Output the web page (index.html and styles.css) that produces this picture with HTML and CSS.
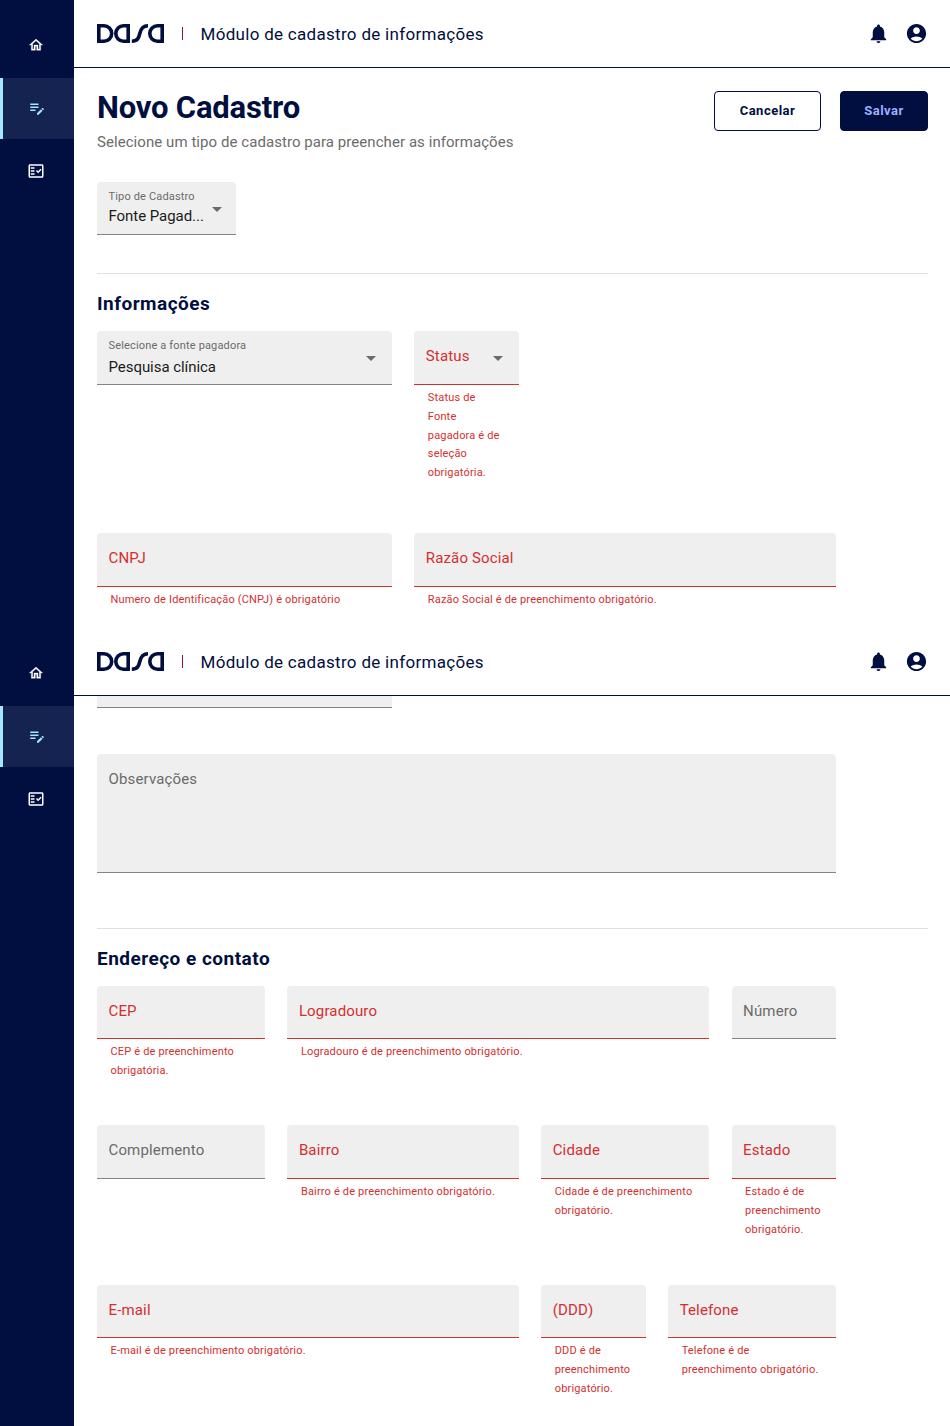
FILE: index.html
```html
<!DOCTYPE html>
<html lang="pt-BR">
<head>
<meta charset="utf-8">
<title>Novo Cadastro</title>
<link rel="stylesheet" href="styles.css">
</head>
<body>
<svg class="defs" width="0" height="0">
  <symbol id="logo" viewBox="0 0 67 19">
    <path fill="none" stroke="#000e40" stroke-width="3.6" d="M1.800 1.800H7A7.700 7.700 0 0 1 7 17.200H1.800Z M31.200 1.800H26.500A7.700 7.700 0 0 0 26.500 17.200H31.200Z M34.800 17.200C40.500 17.200 41.800 14 42.800 9.500S46 1.800 51 1.800 M65.200 1.800H60.500A7.700 7.700 0 0 0 60.500 17.200H65.200Z"/>
  </symbol>
  <symbol id="bell" viewBox="0 0 24 24"><path d="M12 22c1.1 0 2-.9 2-2h-4c0 1.1.9 2 2 2zm6-6v-5c0-3.07-1.63-5.64-4.5-6.32V4c0-.83-.67-1.5-1.5-1.5s-1.5.67-1.5 1.5v.68C7.64 5.36 6 7.92 6 11v5l-2 2v1h16v-1l-2-2z"/></symbol>
  <symbol id="user" viewBox="0 0 24 24"><path d="M12 2C6.48 2 2 6.48 2 12s4.48 10 10 10 10-4.48 10-10S17.52 2 12 2zm0 3.5c1.93 0 3.5 1.57 3.5 3.5s-1.57 3.5-3.5 3.5S8.500 10.930 8.500 9s1.570-3.500 3.500-3.500zM12 20c-2.030 0-4.430-.820-6.140-2.880C7.550 15.800 9.680 15 12 15s4.450.8 6.140 2.120C16.430 19.180 14.030 20 12 20z"/></symbol>
  <symbol id="home" viewBox="0 0 24 24"><path d="M12 5.690l5 4.500V18h-2v-6H9v6H7v-7.810l5-4.500M12 3L2 12h3v8h6v-6h2v6h6v-8h3L12 3z"/></symbol>
  <symbol id="edit" viewBox="0 0 24 24"><path d="M3 10h11v2H3v-2zm0-2h11V6H3v2zm0 8h7v-2H3v2zm15.010-3.130.710-.710c.390-.390 1.020-.390 1.410 0l.710.710c.390.390.390 1.020 0 1.410l-.710.710-2.120-2.120zm-.710.710-5.300 5.300V21h2.120l5.300-5.300-2.120-2.120z"/></symbol>
  <symbol id="check" viewBox="0 0 24 24"><path fill-rule="evenodd" d="M20 3H4c-1.100 0-2 .9-2 2v14c0 1.100.9 2 2 2h16c1.100 0 2-.9 2-2V5c0-1.100-.9-2-2-2zm0 16H4V5h16v14zM19.410 10.420 17.990 9l-3.170 3.170-1.410-1.420L12 12.160 14.820 15zM5 7h5v2H5zM5 11h5v2H5zM5 15h5v2H5z"/></symbol>
</svg>

<div class="view view-top">
  <nav class="side">
    <a class="nav"><svg><use href="#home"/></svg></a>
    <a class="nav active"><svg><use href="#edit"/></svg></a>
    <a class="nav"><svg><use href="#check"/></svg></a>
  </nav>
  <div class="page">
    <header class="bar">
      <svg class="logo"><use href="#logo"/></svg><span class="sep"></span>
      <span class="module">Módulo de cadastro de informações</span>
      <svg class="ico"><use href="#bell"/></svg><svg class="ico"><use href="#user"/></svg>
    </header>
    <main class="body">
      <div class="head">
        <div>
          <h1 class="title">Novo Cadastro</h1>
          <p class="sub">Selecione um tipo de cadastro para preencher as informações</p>
        </div>
        <div class="actions"><button class="btn">Cancelar</button><button class="btn primary">Salvar</button></div>
      </div>
      <div class="field select short kind"><div><span class="mini">Tipo de Cadastro</span><span class="value">Fonte Pagad...</span></div><i class="arrow"></i></div>
      <h2 class="section">Informações</h2>
      <div class="grid r202">
        <div class="c5"><div class="field select wide"><div><span class="mini">Selecione a fonte pagadora</span><span class="value">Pesquisa clínica</span></div><i class="arrow"></i></div></div>
        <div class="c2 error"><div class="field select"><span class="label">Status</span><i class="arrow"></i></div><p class="help">Status de Fonte pagadora é de seleção obrigatória.</p></div>
      </div>
      <div class="grid">
        <div class="c5 error"><div class="field"><span class="label">CNPJ</span></div><p class="help">Numero de Identificação (CNPJ) é obrigatório</p></div>
        <div class="c7 error"><div class="field"><span class="label">Razão Social</span></div><p class="help">Razão Social é de preenchimento obrigatório.</p></div>
      </div>
    </main>
  </div>
</div>

<div class="view view-bottom">
  <nav class="side">
    <a class="nav"><svg><use href="#home"/></svg></a>
    <a class="nav active"><svg><use href="#edit"/></svg></a>
    <a class="nav"><svg><use href="#check"/></svg></a>
  </nav>
  <div class="page">
    <header class="bar">
      <svg class="logo"><use href="#logo"/></svg><span class="sep"></span>
      <span class="module">Módulo de cadastro de informações</span>
      <svg class="ico"><use href="#bell"/></svg><svg class="ico"><use href="#user"/></svg>
    </header>
    <main class="body">
      <div class="grid r58"><div class="c5"><div class="field cut"></div></div></div>
      <div class="grid"><div class="c12"><div class="field area"><span class="label">Observações</span></div></div></div>
      <h2 class="section second">Endereço e contato</h2>
      <div class="grid r139">
        <div class="c3 error"><div class="field short"><span class="label">CEP</span></div><p class="help">CEP é de preenchimento obrigatória.</p></div>
        <div class="c7 error"><div class="field short"><span class="label">Logradouro</span></div><p class="help">Logradouro é de preenchimento obrigatório.</p></div>
        <div class="c2"><div class="field short"><span class="label">Número</span></div></div>
      </div>
      <div class="grid r160">
        <div class="c3"><div class="field"><span class="label">Complemento</span></div></div>
        <div class="c4 error"><div class="field"><span class="label">Bairro</span></div><p class="help">Bairro é de preenchimento obrigatório.</p></div>
        <div class="c3 error"><div class="field"><span class="label">Cidade</span></div><p class="help">Cidade é de preenchimento obrigatório.</p></div>
        <div class="c2 error"><div class="field"><span class="label">Estado</span></div><p class="help">Estado é de preenchimento obrigatório.</p></div>
      </div>
      <div class="grid">
        <div class="c7 error"><div class="field short"><span class="label">E-mail</span></div><p class="help">E-mail é de preenchimento obrigatório.</p></div>
        <div class="c2 error"><div class="field short"><span class="label">(DDD)</span></div><p class="help">DDD é de preenchimento obrigatório.</p></div>
        <div class="c3 error"><div class="field short"><span class="label">Telefone</span></div><p class="help">Telefone é de preenchimento obrigatório.</p></div>
      </div>
    </main>
  </div>
</div>
</body>
</html>
```
FILE: styles.css
```css
* { box-sizing: border-box; }
body { margin: 0; width: 950px; background: #fff; color: #000e40; font-family: Roboto, "Liberation Sans", sans-serif; }
h1, h2, p { margin: 0; }
.defs { display: block; height: 0; }
.view { display: flex; overflow: hidden; }
.view-top { height: 628px; }
.view-bottom { height: 798px; }
.side { width: 74px; flex: none; background: #000e40; padding-top: 16px; }
.nav { display: flex; align-items: center; justify-content: center; height: 62px; padding-right: 2px; color: #fff; }
.nav.active { height: 61px; background: #142350; border-left: 3px solid #a4e7ff; padding-right: 4px; color: #a4e7ff; }
.nav:last-child { height: 65px; }
.nav svg { width: 18px; height: 18px; margin-top: -1px; fill: currentColor; }
.nav:first-child svg { width: 16px; height: 16px; margin-top: -4px; stroke: currentColor; stroke-width: .5px; }
.page { flex: 1; min-width: 0; }
.bar { height: 68px; border-bottom: 1px solid #000e40; display: flex; align-items: center; padding: 0 22px 0 23px; }
.logo { width: 67px; height: 19px; }
.sep { width: 1px; height: 13px; background: #8a1238; margin: 0 17.500px 0 18px; }
.module { flex: 1; font-size: 17px; letter-spacing: .3px; }
.ico { width: 23px; height: 23px; fill: #000e40; margin-left: 15px; }
.body { padding: 0 22px 0 23px; }
.head { display: flex; justify-content: space-between; height: 114px; padding-top: 22px; }
.title { font-size: 31px; line-height: 36px; font-weight: 700; letter-spacing: -.2px; }
.sub { margin-top: 7px; font-size: 15px; line-height: 18px; color: #6b6b6b; letter-spacing: .06px; }
.actions { display: flex; gap: 19px; padding-top: 1px; }
.btn { height: 40px; width: 107px; border: 1px solid #000e40; border-radius: 4px; background: #fff; color: #000e40; font: 700 13px/16px Roboto, sans-serif; letter-spacing: .5px; padding: 0; }
.btn.primary { width: 88px; background: #000e40; color: #9db0ff; }
.field { height: 54px; background: #efefef; border-bottom: 1px solid #858585; border-radius: 4px 4px 0 0; padding: 16px 12px 0 11.500px; color: #6b6b6b; }
.field.short { height: 53px; }
.kind { width: 139px; }
.select { display: flex; justify-content: space-between; }
.arrow { width: 0; height: 0; border: 5px solid transparent; border-top-color: #6b6b6b; border-bottom: 0; margin: 9px 3.500px 0 0; }
.kind .arrow { margin-right: 2px; }
.mini, .value { display: block; }
.mini { font-size: 11px; line-height: 14px; margin-top: -8px; letter-spacing: .16px; }
.value { font-size: 15px; line-height: 18px; margin-top: 3px; color: #1b1b1b; letter-spacing: -.05px; }
.wide .value { margin-top: 5px; }
.label { display: block; font-size: 15px; line-height: 18px; letter-spacing: .15px; }
.error .field { border-color: #d32f2f; }
.error .label, .help { color: #d32f2f; }
.help { font-size: 11px; line-height: 18.800px; padding: 4px 12px 0 13.500px; letter-spacing: .17px; }
.section { border-top: 1px solid #e0e0e0; margin-top: 38px; padding-top: 18px; height: 58px; font-size: 19px; line-height: 24px; letter-spacing: .48px; }
.section.second { margin-top: 55px; }
.grid { width: 739.020px; display: grid; grid-template-columns: repeat(12, minmax(0, 1fr)); column-gap: 22.500px; align-items: start; align-content: start; }
.r202 { height: 202px; } .r58 { height: 58px; } .r139 { height: 139px; } .r160 { height: 160px; }
.c2 { grid-column: span 2; } .c3 { grid-column: span 3; } .c4 { grid-column: span 4; }
.c5 { grid-column: span 5; } .c7 { grid-column: span 7; } .c12 { grid-column: span 12; }
.field.cut { height: 12px; border-radius: 0; padding: 0; }
.field.area { height: 119px; }
```
